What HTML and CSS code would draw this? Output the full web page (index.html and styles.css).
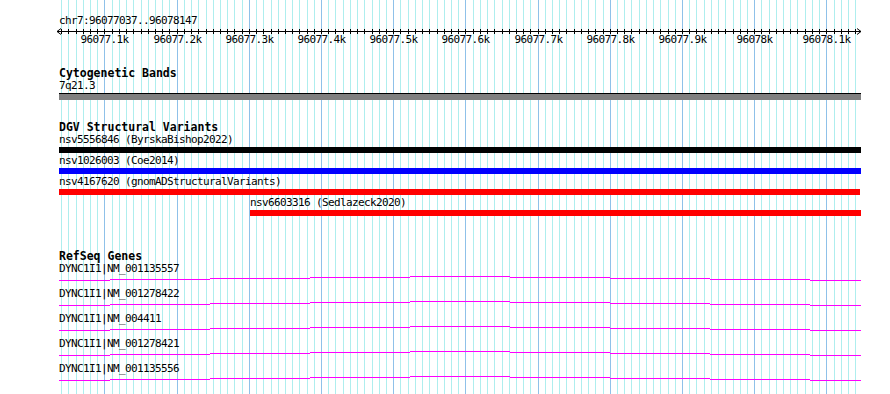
FILE: index.html
```html
<!DOCTYPE html>
<html lang="en">
<head>
    <meta charset="UTF-8">
    <meta name="viewport" content="width=device-width, initial-scale=1.0">
    <title>chr7:96077037..96078147</title>
    <link rel="stylesheet" href="styles.css">
</head>
<body>

    <!-- intron hat used by every gene row -->
    <svg class="defs" width="0" height="0">
        <symbol id="intron" viewBox="0 0 802 5">
            <rect x="0" y="4" width="51" height="1"/>
            <rect x="51" y="3" width="100" height="1"/>
            <rect x="151" y="2" width="100" height="1"/>
            <rect x="251" y="1" width="100" height="1"/>
            <rect x="351" y="0" width="100" height="1"/>
            <rect x="451" y="1" width="100" height="1"/>
            <rect x="551" y="2" width="100" height="1"/>
            <rect x="651" y="3" width="100" height="1"/>
            <rect x="751" y="4" width="51" height="1"/>
        </symbol>
    </svg>

    <div class="browser">
        <!-- grid lines, drawn by script.js -->
        <svg class="grid" id="grid" width="890" height="394"></svg>

        <div class="tracks">
            <div class="coords">chr7:96077037..96078147</div>
            <svg class="ruler" id="ruler" width="812" height="20"></svg>

            <!-- Cytogenetic Bands -->
            <section class="track cyto">
                <h2>Cytogenetic Bands</h2>
                <div class="feature">
                    <div class="label">7q21.3</div>
                    <div class="bar band" style="width: 802px"></div>
                </div>
            </section>

            <!-- DGV Structural Variants -->
            <section class="track dgv">
                <h2>DGV Structural Variants</h2>
                <div class="feature">
                    <div class="label">nsv5556846 (ByrskaBishop2022)</div>
                    <div class="bar black" style="width: 802px"></div>
                </div>
                <div class="feature">
                    <div class="label">nsv1026003 (Coe2014)</div>
                    <div class="bar blue" style="width: 802px"></div>
                </div>
                <div class="feature">
                    <div class="label">nsv4167620 (gnomADStructuralVariants)</div>
                    <div class="bar red" style="width: 801px"></div>
                </div>
                <div class="feature" style="margin-left: 191px">
                    <div class="label">nsv6603316 (Sedlazeck2020)</div>
                    <div class="bar red" style="width: 611px"></div>
                </div>
            </section>

            <!-- RefSeq Genes -->
            <section class="track genes">
                <h2>RefSeq Genes</h2>
                <div class="gene">
                    <div class="label">DYNC1I1|NM_001135557</div>
                    <svg class="intron" width="802" height="5"><use href="#intron"/></svg>
                </div>
                <div class="gene">
                    <div class="label">DYNC1I1|NM_001278422</div>
                    <svg class="intron" width="802" height="5"><use href="#intron"/></svg>
                </div>
                <div class="gene">
                    <div class="label">DYNC1I1|NM_004411</div>
                    <svg class="intron" width="802" height="5"><use href="#intron"/></svg>
                </div>
                <div class="gene">
                    <div class="label">DYNC1I1|NM_001278421</div>
                    <svg class="intron" width="802" height="5"><use href="#intron"/></svg>
                </div>
                <div class="gene">
                    <div class="label">DYNC1I1|NM_001135556</div>
                    <svg class="intron" width="802" height="5"><use href="#intron"/></svg>
                </div>
            </section>
        </div>
    </div>

    <script src="script.js"></script>
</body>
</html>
```

FILE: styles.css
```css
body {
    margin: 0;
    background: #fff;
    color: #000;
    font-family: "DejaVu Sans Mono", monospace;
    font-size: 11px;
    letter-spacing: -0.62px;
    line-height: 12px;
}
.defs {
    position: absolute;
}
.browser {
    position: relative;
    width: 890px;
    height: 394px;
    overflow: hidden;
}
.grid {
    position: absolute;
    top: 0;
    left: 0;
}
.grid .minor {
    stroke: #aeeeee;
}
.grid .major {
    stroke: #8fc1e9;
}
.tracks {
    position: relative;
    padding: 15px 0 0 59px;
}
.coords {
    height: 12px;
}
.ruler {
    display: block;
    margin-left: -4px;
}
.ruler line {
    stroke: #000;
    stroke-width: 1;
}
.ruler text {
    font-family: "DejaVu Sans Mono", monospace;
    font-size: 11px;
    letter-spacing: -0.62px;
    fill: #000;
}

h2 {
    margin: 0 0 1px;
    font-size: 11.5px;
    font-weight: bold;
    letter-spacing: 0;
    line-height: 12px;
}
.cyto {
    margin-top: 20px;
}
.dgv {
    margin-top: 21px;
}
.genes {
    margin-top: 34px;
}

.label {
    white-space: nowrap;
}
.bar {
    height: 6px;
    margin-top: 1px;
}
.dgv .feature {
    margin-bottom: 2px;
}
.bar.band {
    border-top: 1px solid #000;
    background: #808080;
}
.bar.black {
    background: #000;
}
.bar.blue {
    background: #0000ff;
}
.bar.red {
    background: #ff0000;
}

.gene {
    margin-bottom: 7px;
}
.intron {
    display: block;
    margin-top: 1px;
    fill: #ff00ff;
}
```

FILE: script.js
```js
// view: chr7:96077037..96078147, drawn 802px wide from x = 59
const START = 96077037;
const END = 96078147;
const LEFT = 59;
const WIDTH = 802;
const HEIGHT = 394;
const SVGNS = "http://www.w3.org/2000/svg";

const scale = WIDTH / (END - START + 1);

function pixel(bp) {
    return Math.round(LEFT + (bp - START) * scale) + 0.5;
}

function make(tag, attrs, parent) {
    let el = document.createElementNS(SVGNS, tag);
    for (let key in attrs) el.setAttribute(key, attrs[key]);
    parent.appendChild(el);
    return el;
}

// background grid, one line per 10bp, darker every 100bp
let grid = document.getElementById("grid");
for (let bp = Math.ceil(START / 10) * 10; bp <= END; bp += 10) {
    let x = pixel(bp);
    make("line", {
        x1: x, y1: 0, x2: x, y2: HEIGHT,
        class: bp % 100 === 0 ? "major" : "minor"
    }, grid);
}

// ruler: svg starts at x = 55, y = 27
let ruler = document.getElementById("ruler");
const OX = 55;
const AXIS = 4.5;
let left = 57 - OX;
let right = LEFT + WIDTH - OX;

make("line", { x1: left, y1: AXIS, x2: right, y2: AXIS }, ruler);
make("line", { x1: left, y1: AXIS, x2: left + 4, y2: AXIS - 3 }, ruler);
make("line", { x1: left, y1: AXIS, x2: left + 4, y2: AXIS + 3 }, ruler);
make("line", { x1: right, y1: AXIS, x2: right - 4, y2: AXIS - 3 }, ruler);
make("line", { x1: right, y1: AXIS, x2: right - 4, y2: AXIS + 3 }, ruler);

for (let bp = Math.ceil(START / 10) * 10; bp <= END; bp += 10) {
    let x = pixel(bp) - OX;
    make("line", { x1: x, y1: 2, x2: x, y2: 7 }, ruler);

    if (bp % 100 === 0) {
        let label = make("text", { x: x, y: 16.3, "text-anchor": "middle" }, ruler);
        label.textContent = (bp / 1000) + "k";
    }
}
```
